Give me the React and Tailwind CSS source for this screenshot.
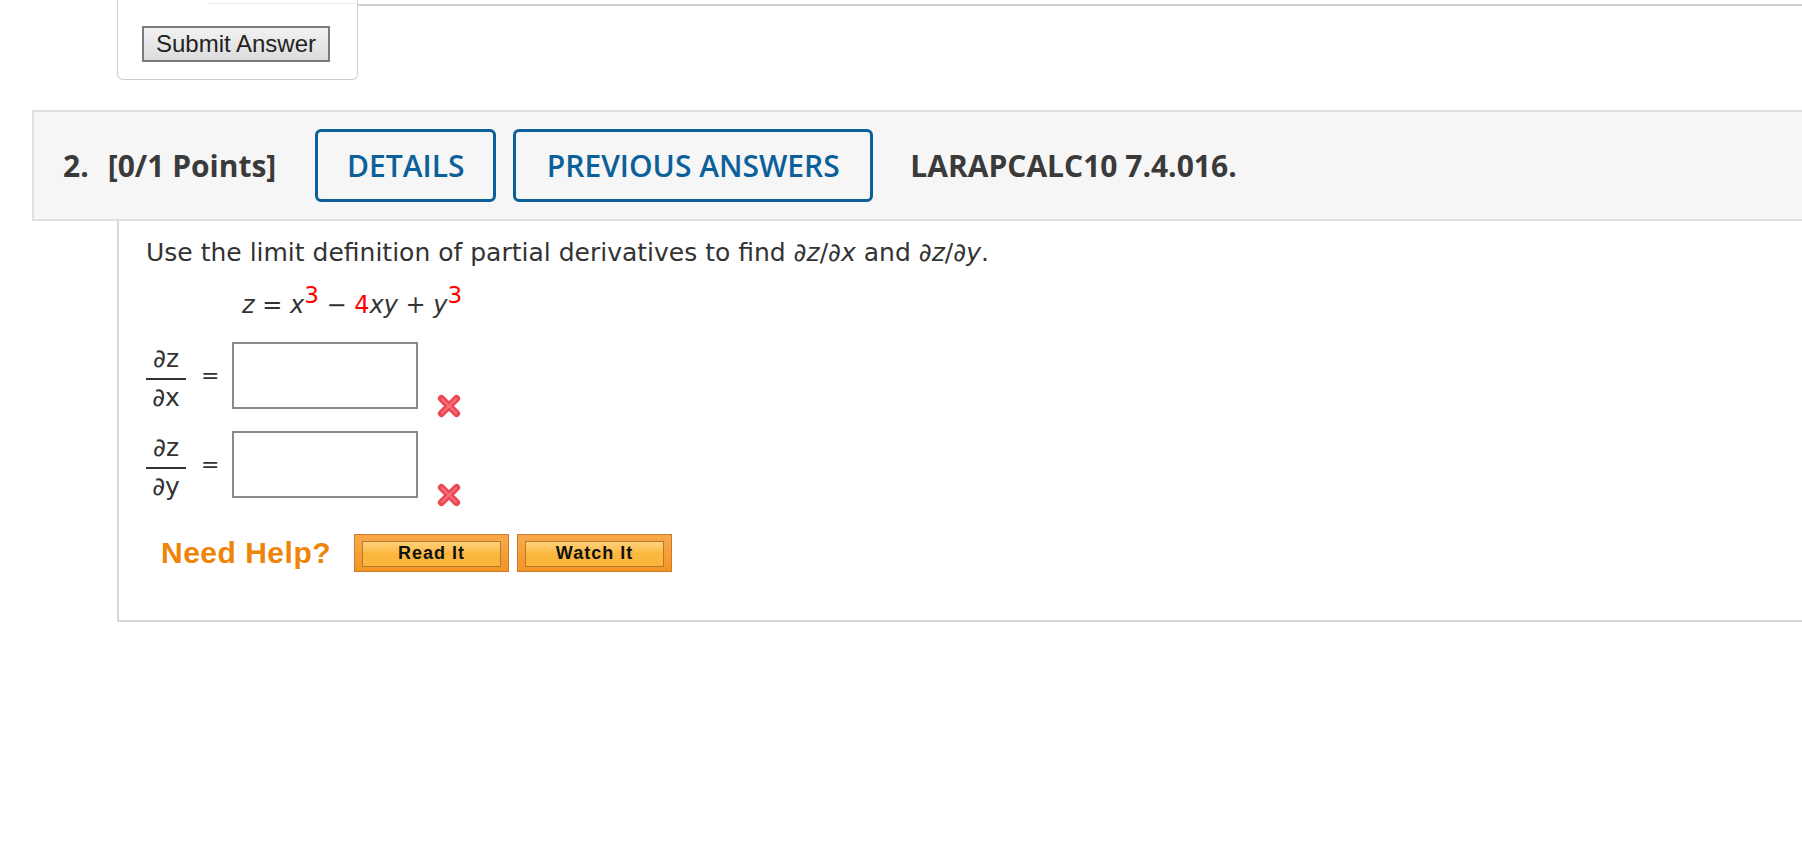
const verdana = { fontFamily: '"DejaVu Sans", Verdana, sans-serif' };

function WrongMark() {
    return (
        <svg width="26" height="26" viewBox="0 0 24 24" className="shrink-0">
            <g strokeLinecap="round">
                <path d="M5 5 L19 19 M19 5 L5 19" stroke="#ee4652" strokeWidth="6.5" />
                <path d="M5.5 5.5 L18.5 18.5 M18.5 5.5 L5.5 18.5" stroke="#f7838b" strokeWidth="2" opacity="0.7" />
            </g>
        </svg>
    );
}

function Fraction({ bottom }) {
    return (
        <div className="flex flex-col items-center w-[40px] text-[25px] leading-[22px] text-[#333]">
            <span className="pb-[8px]">∂z</span>
            <span className="w-full border-t-2 border-[#333]"></span>
            <span className="pt-[7px]">∂{bottom}</span>
        </div>
    );
}

function AnswerRow({ bottom }) {
    return (
        <div className="flex items-center h-[67px]">
            <div className="pt-[6px]">
                <Fraction bottom={bottom} />
            </div>
            <span className="ml-[15px] text-[22px] text-[#333]">=</span>
            <input className="ml-[13px] w-[186px] h-[67px] border-2 border-[#8a8a8a] bg-white outline-none" />
            <div className="self-start mt-[51px] ml-[18px]">
                <WrongMark />
            </div>
        </div>
    );
}

function HelpButton({ label }) {
    return (
        <button className="w-[155px] h-[38px] border border-[#c97a2c] bg-gradient-to-b from-[#f9a94a] to-[#f39522] pt-[6px] pb-[4px] px-[7px]">
            <div className="h-full border border-[#b9782f] bg-gradient-to-b from-[#ffd27a] via-[#fbb73d] to-[#fbb73d] flex items-center justify-center font-bold text-[18px] tracking-[1px] text-[#111]"
                 style={{ fontFamily: '"Liberation Sans", Arial, sans-serif' }}>
                {label}
            </div>
        </button>
    );
}

export default function App() {
    return (
        <div className="w-[1802px] h-[858px] bg-white overflow-hidden" style={verdana}>
            {/* previous question footer */}
            <div className="flex h-[80px]">
                <div className="w-[117px] shrink-0"></div>
                <div className="w-[241px] shrink-0 border-x border-b border-[#cfcfcf] rounded-b-[6px]">
                    <div className="ml-[90px] mt-[3px] border-t border-[#ececec]"></div>
                    <button className="ml-[24px] mt-[22px] w-[188px] h-[36px] border-2 border-[#7a7a7a] bg-gradient-to-b from-[#f2f2f2] to-[#dcdcdc] text-[24px] leading-none text-[#222]"
                            style={{ fontFamily: '"Liberation Sans", Arial, sans-serif' }}>
                        Submit Answer
                    </button>
                </div>
                <div className="flex-1 mt-[4px] border-t-2 border-[#d0d0d0]"></div>
            </div>

            {/* question header */}
            <div className="ml-[32px] mt-[30px] h-[111px] bg-[#f6f6f6] border-y-2 border-l-2 border-[#e0e0e0] flex items-center pl-[29px] text-[#3a3a3a]"
                 style={{ fontFamily: '"Open Sans", sans-serif' }}>
                <span className="text-[30px] font-bold">2.</span>
                <span className="ml-[19px] text-[30px] font-bold">[0/1 Points]</span>
                <button className="ml-[39px] w-[181px] h-[73px] border-[3px] border-[#0b609a] rounded-[6px] text-[30px] font-semibold text-[#0b609a]">
                    DETAILS
                </button>
                <button className="ml-[17px] w-[360px] h-[73px] border-[3px] border-[#0b609a] rounded-[6px] text-[30px] font-semibold text-[#0b609a]">
                    PREVIOUS ANSWERS
                </button>
                <span className="ml-[37px] text-[30px] font-bold">LARAPCALC10 7.4.016.</span>
            </div>

            {/* question body */}
            <div className="ml-[117px] h-[401px] border-l-2 border-b-2 border-[#d6d6d6] pl-[27px] pt-[16px] text-[#333]">
                <p className="text-[25px] leading-[32px]">
                    Use the limit definition of partial derivatives to find <i>∂z</i>/<i>∂x</i> and <i>∂z</i>/<i>∂y</i>.
                </p>
                <p className="mt-[20px] ml-[96px] text-[24px] leading-[32px]">
                    <i>z</i> = <i>x</i><sup className="text-[#f00] text-[23px] relative -top-[10px]">3</sup> − <span className="text-[#f00]">4</span><i>xy</i> + <i>y</i><sup className="text-[#f00] text-[23px] relative -top-[10px]">3</sup>
                </p>

                <div className="mt-[21px] flex flex-col gap-[22px]">
                    <AnswerRow bottom="x" />
                    <AnswerRow bottom="y" />
                </div>

                <div className="mt-[32px] ml-[15px] flex items-center">
                    <span className="text-[30px] font-bold tracking-[0.5px] text-[#ee8408]"
                          style={{ fontFamily: '"Liberation Sans", Arial, sans-serif' }}>
                        Need Help?
                    </span>
                    <div className="ml-[23px] flex gap-[8px]">
                        <HelpButton label="Read It" />
                        <HelpButton label="Watch It" />
                    </div>
                </div>
            </div>
        </div>
    );
}
